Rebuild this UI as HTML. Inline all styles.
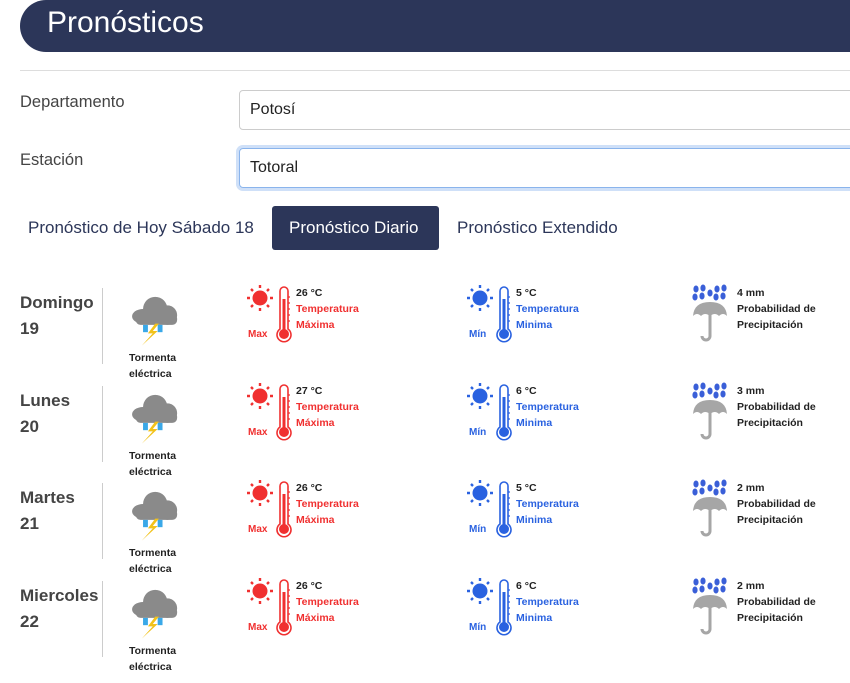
<!DOCTYPE html>
<html><head><meta charset="utf-8"><style>
*{margin:0;padding:0;box-sizing:border-box}
body{width:850px;height:683px;overflow:hidden;background:#fff;font-family:"Liberation Sans",sans-serif;position:relative}
.a{position:absolute;white-space:nowrap}
.hdr{left:20px;top:0;width:850px;height:52px;background:#2c3659;border-radius:26px 0 0 26px}
.hdr span{position:absolute;left:27px;top:6px;color:#fff;font-size:30px}
.hr{left:20px;top:70px;width:830px;height:1px;background:#ddd}
.lbl{font-size:16.5px;color:#444}
.inp{left:239px;width:640px;height:40px;border:1px solid #ccc;border-radius:4px;font-size:16px;color:#222;padding:10px 0 0 10px}
.foc{border-color:#8ab4ec;box-shadow:0 0 0 3px #cfe0f8}
.tab{font-size:17px;color:#2c3659}
.btn{left:272px;top:206px;width:167px;height:44px;background:#2c3659;border-radius:3px;color:#fff;font-size:17px;padding:12px 0 0 17px}
.row{position:absolute;left:0;width:850px;height:98px}
.day{left:20px;top:0;font-size:17px;font-weight:bold;color:#444;line-height:26px}
.vl{left:102px;top:-2px;width:1px;height:76px;background:#ccc}
.cap{font-size:10.5px;font-weight:bold;color:#222;line-height:16px}
.t{font-size:10.5px;font-weight:bold;line-height:16px}
</style></head><body>
<svg width="0" height="0" style="position:absolute">
<defs>
<g id="storm">
<ellipse cx="14" cy="20" rx="9" ry="6" fill="#8a8a8a"/>
<circle cx="24" cy="14" r="10" fill="#8a8a8a"/>
<circle cx="34" cy="19" r="8" fill="#8a8a8a"/>
<rect x="8" y="18" width="34" height="9" rx="4" fill="#8a8a8a"/>
<rect x="14" y="27" width="4" height="6" fill="#3aa8e8"/><rect x="26" y="27" width="4" height="6" fill="#3aa8e8"/>
<path d="M24 26 L18 34 L22 34 L13 44 L26 32 L22 32 L27 26Z" fill="#f2c21a"/>
</g>
<g id="therm">
<path d="M10 2 a4 4 0 0 1 4 4 v38 a7 7 0 1 1 -8 0 v-38 a4 4 0 0 1 4 -4z" fill="none" stroke="currentColor" stroke-width="1.6"/>
<rect x="8.5" y="14" width="3" height="32" fill="currentColor"/>
<circle cx="10" cy="49" r="5" fill="currentColor"/>
<path d="M14 12h2M14 18h2M14 24h2M14 30h2M14 36h2" stroke="currentColor" stroke-width="1.2"/>
</g>
<g id="sun">
<circle cx="13" cy="13" r="7.5" fill="currentColor"/>
<g stroke="currentColor" stroke-width="2.4">
<path d="M13 0v3M13 23v3M0 13h3M23 13h3M4 4l2 2M20 20l2 2M22 4l-2 2M4 22l2-2"/></g>
</g>
<g id="rain">
<g fill="#3a5fd8"><ellipse cx="5" cy="5" rx="2.6" ry="3.5"/><ellipse cx="4" cy="13" rx="2.6" ry="3.5"/><ellipse cx="12" cy="4" rx="2.6" ry="3.5"/><ellipse cx="11" cy="12" rx="2.6" ry="3.5"/><ellipse cx="19" cy="9" rx="2.6" ry="3.5"/><ellipse cx="26" cy="5" rx="2.6" ry="3.5"/><ellipse cx="25" cy="13" rx="2.6" ry="3.5"/><ellipse cx="33" cy="4" rx="2.6" ry="3.5"/><ellipse cx="32" cy="12" rx="2.6" ry="3.5"/></g>
<path d="M2 32 Q3 18 19 18 Q35 18 36 32 Q32 28 28 32 Q24 28 19 32 Q14 28 10 32 Q6 28 2 32Z" fill="#a6a6a6"/>
<path d="M19 30 V52 a4 4 0 0 1 -8 0" fill="none" stroke="#a6a6a6" stroke-width="3"/>
</g>
</defs></svg>

<div class="a hdr"><span>Pronósticos</span></div>
<div class="a hr"></div>
<div class="a lbl" style="left:20px;top:93px">Departamento</div>
<div class="a inp" style="top:90px">Potosí</div>
<div class="a lbl" style="left:20px;top:151px">Estación</div>
<div class="a inp foc" style="top:148px">Totoral</div>
<div class="a tab" style="left:28px;top:218px">Pronóstico de Hoy Sábado 18</div>
<div class="a btn">Pronóstico Diario</div>
<div class="a tab" style="left:457px;top:218px">Pronóstico Extendido</div>

<div class="row" style="top:290px">
<div class="a day">Domingo<br>19</div><div class="a vl"></div>
<svg class="a" style="left:126px;top:2px" width="56" height="56" viewBox="0 0 46 46"><use href="#storm"/></svg>
<div class="a cap" style="left:129px;top:60px">Tormenta<br>eléctrica</div>
<svg class="a" style="left:247px;top:-5px;color:#f03030" width="26" height="26"><use href="#sun"/></svg>
<svg class="a" style="left:274px;top:-5px;color:#f03030" width="20" height="58"><use href="#therm"/></svg>
<div class="a t" style="left:248px;top:37px;color:#f03030;font-size:10px">Max</div>
<div class="a t" style="left:296px;top:-5px;color:#222">26 °C</div>
<div class="a t" style="left:296px;top:11px;color:#f03030">Temperatura<br>Máxima</div>
<svg class="a" style="left:467px;top:-5px;color:#2a62e0" width="26" height="26"><use href="#sun"/></svg>
<svg class="a" style="left:494px;top:-5px;color:#2a62e0" width="20" height="58"><use href="#therm"/></svg>
<div class="a t" style="left:469px;top:37px;color:#2a62e0;font-size:10px">Mín</div>
<div class="a t" style="left:516px;top:-5px;color:#222">5 °C</div>
<div class="a t" style="left:516px;top:11px;color:#2a62e0">Temperatura<br>Minima</div>
<svg class="a" style="left:691px;top:-6px" width="40" height="60"><use href="#rain"/></svg>
<div class="a t" style="left:737px;top:-5px;color:#222">4 mm</div>
<div class="a t" style="left:737px;top:11px;color:#222">Probabilidad de<br>Precipitación</div>
</div>

<div class="row" style="top:388px">
<div class="a day">Lunes<br>20</div><div class="a vl"></div>
<svg class="a" style="left:126px;top:2px" width="56" height="56" viewBox="0 0 46 46"><use href="#storm"/></svg>
<div class="a cap" style="left:129px;top:60px">Tormenta<br>eléctrica</div>
<svg class="a" style="left:247px;top:-5px;color:#f03030" width="26" height="26"><use href="#sun"/></svg>
<svg class="a" style="left:274px;top:-5px;color:#f03030" width="20" height="58"><use href="#therm"/></svg>
<div class="a t" style="left:248px;top:37px;color:#f03030;font-size:10px">Max</div>
<div class="a t" style="left:296px;top:-5px;color:#222">27 °C</div>
<div class="a t" style="left:296px;top:11px;color:#f03030">Temperatura<br>Máxima</div>
<svg class="a" style="left:467px;top:-5px;color:#2a62e0" width="26" height="26"><use href="#sun"/></svg>
<svg class="a" style="left:494px;top:-5px;color:#2a62e0" width="20" height="58"><use href="#therm"/></svg>
<div class="a t" style="left:469px;top:37px;color:#2a62e0;font-size:10px">Mín</div>
<div class="a t" style="left:516px;top:-5px;color:#222">6 °C</div>
<div class="a t" style="left:516px;top:11px;color:#2a62e0">Temperatura<br>Minima</div>
<svg class="a" style="left:691px;top:-6px" width="40" height="60"><use href="#rain"/></svg>
<div class="a t" style="left:737px;top:-5px;color:#222">3 mm</div>
<div class="a t" style="left:737px;top:11px;color:#222">Probabilidad de<br>Precipitación</div>
</div>

<div class="row" style="top:485px">
<div class="a day">Martes<br>21</div><div class="a vl"></div>
<svg class="a" style="left:126px;top:2px" width="56" height="56" viewBox="0 0 46 46"><use href="#storm"/></svg>
<div class="a cap" style="left:129px;top:60px">Tormenta<br>eléctrica</div>
<svg class="a" style="left:247px;top:-5px;color:#f03030" width="26" height="26"><use href="#sun"/></svg>
<svg class="a" style="left:274px;top:-5px;color:#f03030" width="20" height="58"><use href="#therm"/></svg>
<div class="a t" style="left:248px;top:37px;color:#f03030;font-size:10px">Max</div>
<div class="a t" style="left:296px;top:-5px;color:#222">26 °C</div>
<div class="a t" style="left:296px;top:11px;color:#f03030">Temperatura<br>Máxima</div>
<svg class="a" style="left:467px;top:-5px;color:#2a62e0" width="26" height="26"><use href="#sun"/></svg>
<svg class="a" style="left:494px;top:-5px;color:#2a62e0" width="20" height="58"><use href="#therm"/></svg>
<div class="a t" style="left:469px;top:37px;color:#2a62e0;font-size:10px">Mín</div>
<div class="a t" style="left:516px;top:-5px;color:#222">5 °C</div>
<div class="a t" style="left:516px;top:11px;color:#2a62e0">Temperatura<br>Minima</div>
<svg class="a" style="left:691px;top:-6px" width="40" height="60"><use href="#rain"/></svg>
<div class="a t" style="left:737px;top:-5px;color:#222">2 mm</div>
<div class="a t" style="left:737px;top:11px;color:#222">Probabilidad de<br>Precipitación</div>
</div>

<div class="row" style="top:583px">
<div class="a day">Miercoles<br>22</div><div class="a vl"></div>
<svg class="a" style="left:126px;top:2px" width="56" height="56" viewBox="0 0 46 46"><use href="#storm"/></svg>
<div class="a cap" style="left:129px;top:60px">Tormenta<br>eléctrica</div>
<svg class="a" style="left:247px;top:-5px;color:#f03030" width="26" height="26"><use href="#sun"/></svg>
<svg class="a" style="left:274px;top:-5px;color:#f03030" width="20" height="58"><use href="#therm"/></svg>
<div class="a t" style="left:248px;top:37px;color:#f03030;font-size:10px">Max</div>
<div class="a t" style="left:296px;top:-5px;color:#222">26 °C</div>
<div class="a t" style="left:296px;top:11px;color:#f03030">Temperatura<br>Máxima</div>
<svg class="a" style="left:467px;top:-5px;color:#2a62e0" width="26" height="26"><use href="#sun"/></svg>
<svg class="a" style="left:494px;top:-5px;color:#2a62e0" width="20" height="58"><use href="#therm"/></svg>
<div class="a t" style="left:469px;top:37px;color:#2a62e0;font-size:10px">Mín</div>
<div class="a t" style="left:516px;top:-5px;color:#222">6 °C</div>
<div class="a t" style="left:516px;top:11px;color:#2a62e0">Temperatura<br>Minima</div>
<svg class="a" style="left:691px;top:-6px" width="40" height="60"><use href="#rain"/></svg>
<div class="a t" style="left:737px;top:-5px;color:#222">2 mm</div>
<div class="a t" style="left:737px;top:11px;color:#222">Probabilidad de<br>Precipitación</div>
</div>
</body></html>
